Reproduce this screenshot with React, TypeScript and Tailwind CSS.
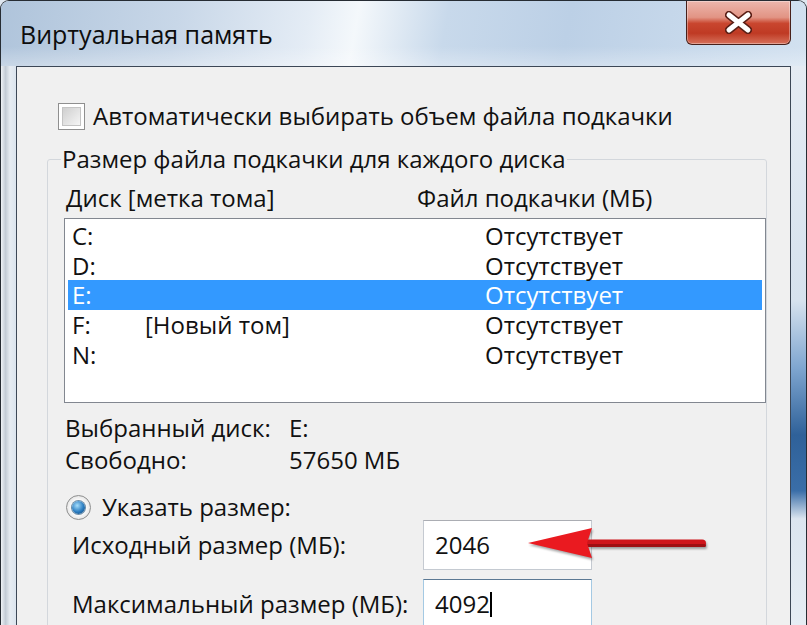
import React from "react";

const drives = [
  { letter: "C:", label: "", selected: false },
  { letter: "D:", label: "", selected: false },
  { letter: "E:", label: "", selected: true },
  { letter: "F:", label: "[Новый том]", selected: false },
  { letter: "N:", label: "", selected: false },
];

function CloseGlyph() {
  return (
    <svg width="27" height="23" viewBox="0 0 27 23">
      <path d="M4 4 L23 19 M23 4 L4 19" stroke="#5a1f16" strokeWidth="8" strokeLinecap="round" />
      <path d="M4 4 L23 19 M23 4 L4 19" stroke="#ffffff" strokeWidth="5" strokeLinecap="round" />
    </svg>
  );
}

function RedArrow() {
  return (
    <svg
      width="192"
      height="40"
      viewBox="0 0 192 40"
      className="absolute left-[448px] top-[3px] drop-shadow-[1px_2px_1px_rgba(0,0,0,0.35)]"
    >
      <rect x="62" y="16.5" width="124" height="7.5" rx="3.75" fill="#cf151b" />
      <rect x="62" y="21" width="124" height="3" rx="1.5" fill="#9e0f12" />
      <polygon points="8,20 72,5 67,20 72,35" fill="#ea1a20" />
    </svg>
  );
}

export default function App() {
  return (
    <div className="w-[807px] h-[625px] overflow-hidden bg-[#dfe7f0] font-['Open_Sans',sans-serif] text-[24px] leading-[28px] text-[#111]">
      <div className="h-full flex flex-col border-x border-t border-[#262c33] rounded-t-[9px] overflow-hidden">
        {/* Title bar */}
        <div className="h-[65px] shrink-0 flex items-start bg-[linear-gradient(to_bottom,transparent_70%,rgba(255,255,255,0.3)),linear-gradient(100deg,#afc4db_0%,#c8d7e8_22%,#e4ecf5_38%,#f4f8fb_44%,#c8d9eb_55%,#bcd0e6_70%,#d2e1f0_100%)]">
          <div className="pl-[19px] pt-[18px] text-[25px] leading-[30px] text-[#0d0d0d]">
            Виртуальная память
          </div>
          <button className="ml-auto mr-[15px] w-[105px] h-[44px] rounded-b-[6px] border border-t-0 border-[#47201a] bg-[linear-gradient(to_bottom,#ecb7ad_0%,#e29484_38%,#c9462f_52%,#bf3a24_75%,#d7715b_100%)] shadow-[inset_0_0_0_1px_rgba(255,255,255,0.35)] flex items-center justify-center">
            <CloseGlyph />
          </button>
        </div>

        <div className="flex-1 flex min-h-0">
          {/* Left frame */}
          <div className="w-[15px] shrink-0 bg-[linear-gradient(to_right,#eef2f6_0%,#c3ccd6_30%,#e6ecf2_60%,#dbe4ee_100%)]" />

          {/* Client area */}
          <div className="flex-1 border-x border-t border-[#3c4756] bg-[#f0f0f0] pt-[35px] pl-[30px]">
            <div className="ml-[11px] flex items-center h-[28px] gap-[8px]">
              <div className="w-[27px] h-[27px] border border-[#8f8f8f] bg-white p-[3px]">
                <div className="w-full h-full border border-[#c4c4c4] bg-[linear-gradient(135deg,#cfcfcf,#f5f5f5)]" />
              </div>
              <span>Автоматически выбирать объем файла подкачки</span>
            </div>

            <fieldset className="mt-[15px] w-[717px] h-[600px] border border-[#d3d7dc] rounded-[3px] pl-[13px]">
              <legend className="px-[1px]">Размер файла подкачки для каждого диска</legend>

              <div className="mt-[11px] pl-[5px] flex h-[28px] items-center">
                <span className="w-[351px]">Диск [метка тома]</span>
                <span>Файл подкачки (МБ)</span>
              </div>

              <div className="mt-[6px] ml-[3px] w-[702px] h-[185px] border border-[#828790] bg-white pt-[2px] px-[3px]">
                {drives.map((d) => (
                  <div
                    key={d.letter}
                    className={
                      "h-[29.6px] leading-[29px] flex items-center pl-[4px] " +
                      (d.selected ? "bg-[#3399ff] text-white" : "")
                    }
                  >
                    <span className="w-[73px]">{d.letter}</span>
                    <span className="w-[340px]">{d.label}</span>
                    <span>Отсутствует</span>
                  </div>
                ))}
              </div>

              <div className="mt-[9px] ml-[4px] grid grid-cols-[224px_auto] leading-[32px]">
                <span>Выбранный диск:</span>
                <span>E:</span>
                <span>Свободно:</span>
                <span>57650 МБ</span>
              </div>

              <div className="mt-[18px] ml-[5px] flex items-center h-[26px] gap-[11px] leading-[26px]">
                <div className="w-[25px] h-[25px] rounded-full border border-[#8e8f8f] bg-[radial-gradient(circle,#ffffff_40%,#e0e0e0_80%)] flex items-center justify-center">
                  <div className="w-[13px] h-[13px] rounded-full bg-[radial-gradient(circle_at_40%_35%,#a6defc,#2a7cc0_55%,#0d3f70)] shadow-[0_0_0_1px_#6f8fa8]" />
                </div>
                <span>Указать размер:</span>
              </div>

              <div className="relative ml-[11px] flex items-center h-[50px]">
                <span className="w-[351px]">Исходный размер (МБ):</span>
                <div className="w-[169px] h-[50px] border border-[#c5cad1] border-t-[#abadb3] bg-white pl-[11px] flex items-center">
                  2046
                </div>
                <RedArrow />
              </div>

              <div className="mt-[9px] ml-[11px] flex items-center h-[50px]">
                <span className="w-[351px]">Максимальный размер (МБ):</span>
                <div className="w-[169px] h-[50px] border border-[#a4c9e3] border-t-[#5b7893] bg-white pl-[11px] flex items-center">
                  4092
                  <span className="inline-block w-[2px] h-[25px] bg-black" />
                </div>
              </div>
            </fieldset>
          </div>

          {/* Right frame */}
          <div className="w-[15px] shrink-0 bg-[linear-gradient(to_bottom,#e4ebf3_0%,#d6e2ee_42%,#7fa6d0_54%,#2f6199_66%,#3a6ea8_76%,#dbe5ef_81%,#e6edf4_100%)]" />
        </div>
      </div>
    </div>
  );
}
